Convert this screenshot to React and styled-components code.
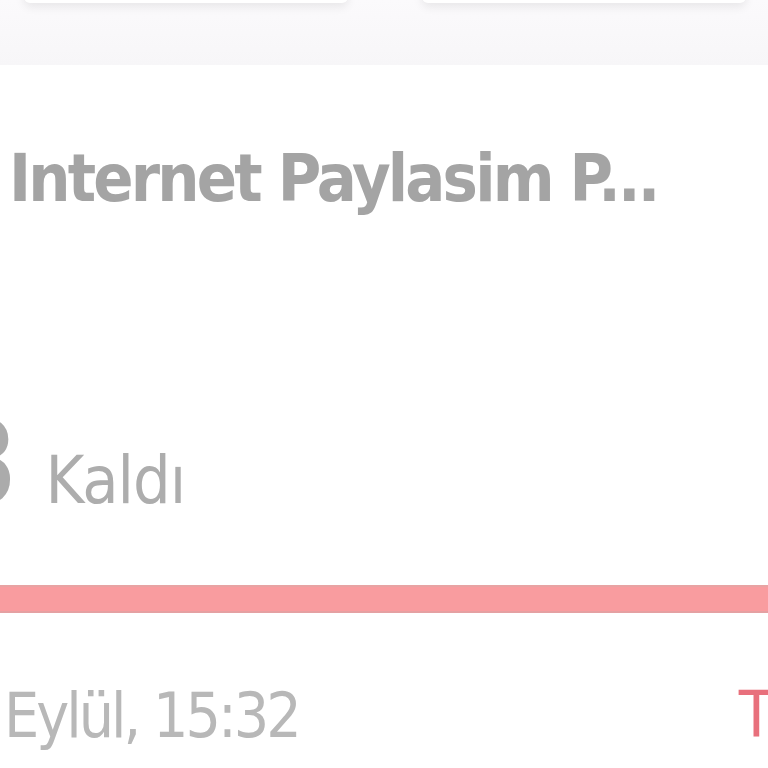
import React from "react";
import styled, { createGlobalStyle } from "styled-components";

const Global = createGlobalStyle`
  html, body { margin: 0; padding: 0; background: #ffffff; }
  body { width: 768px; height: 768px; overflow: hidden; font-family: "DejaVu Sans Condensed", "DejaVu Sans", sans-serif; }
`;

const Page = styled.div`
  width: 768px;
  height: 768px;
  overflow: hidden;
  display: flex;
  flex-direction: column;
  background: #ffffff;
`;

const TopArea = styled.div`
  height: 65px;
  background: linear-gradient(#fbfafc, #f7f6f8);
  display: flex;
  gap: 74px;
  padding: 0 22px 0 24px;
  flex-shrink: 0;
`;

const Tile = styled.div`
  flex: 1;
  height: 100px;
  margin-top: -97px;
  background: #ffffff;
  border-radius: 6px;
  box-shadow: 0 4px 10px rgba(0, 0, 0, 0.08);
`;

const Card = styled.div`
  flex: 1;
  display: flex;
  flex-direction: column;
  background: #ffffff;
`;

const Title = styled.div`
  margin: 74px 0 0 9px;
  font-weight: bold;
  font-size: 66px;
  line-height: 80px;
  letter-spacing: -2.8px;
  color: #a4a4a4;
  white-space: nowrap;
`;

const RemainRow = styled.div`
  display: flex;
  align-items: baseline;
  gap: 27px;
  margin-top: 186px;
  white-space: nowrap;
`;

const BigNum = styled.span`
  font-size: 116px;
  font-weight: normal;
  line-height: 1;
  color: #ababab;
  margin-left: -48px;
`;

const Remain = styled.span`
  font-size: 66px;
  line-height: 1;
  font-weight: normal;
  color: #adadad;
  letter-spacing: -1px;
`;

const Bar = styled.div`
  height: 24px;
  margin-top: 64px;
  background: #f99c9f;
  border-top: 2px solid #e8a3a3;
  border-bottom: 2px solid #e5a0a2;
  flex-shrink: 0;
`;

const Footer = styled.div`
  display: flex;
  justify-content: space-between;
  align-items: baseline;
  margin-top: 70px;
  white-space: nowrap;
`;

const Stamp = styled.span`
  margin-left: 4px;
  font-size: 62px;
  line-height: 1;
  color: #b8b8b8;
  letter-spacing: -3px;
`;

const Action = styled.span`
  font-size: 64px;
  line-height: 1;
  color: #e8707c;
  margin-right: -6px;
`;

export default function App() {
  return (
    <>
      <Global />
      <Page>
        <TopArea>
          <Tile />
          <Tile />
        </TopArea>
        <Card>
          <Title>Internet Paylasim P...</Title>
          <RemainRow>
            <BigNum>3</BigNum>
            <Remain>Kaldı</Remain>
          </RemainRow>
          <Bar />
          <Footer>
            <Stamp>Eylül, 15:32</Stamp>
            <Action>T</Action>
          </Footer>
        </Card>
      </Page>
    </>
  );
}
